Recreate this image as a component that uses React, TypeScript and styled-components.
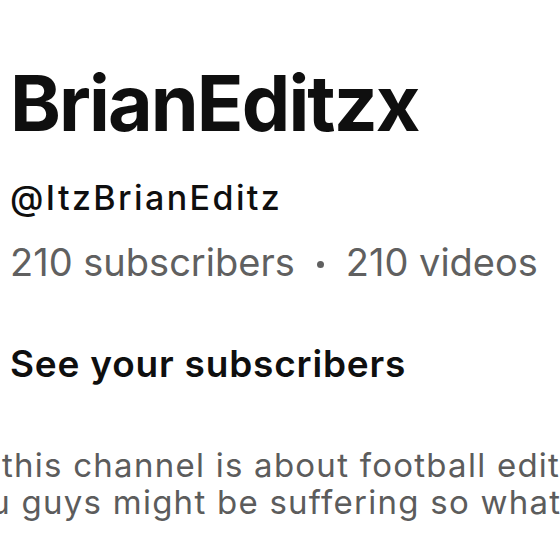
import styled, { createGlobalStyle } from 'styled-components';

const GlobalStyle = createGlobalStyle`
  html, body {
    margin: 0;
    padding: 0;
    background: #ffffff;
  }
  body {
    font-family: Inter, "Noto Sans", "Liberation Sans", sans-serif;
    -webkit-font-smoothing: antialiased;
  }
`;

const Page = styled.div`
  width: 560px;
  height: 560px;
  overflow: hidden;
  background: #fff;
  padding: 63px 0 0 10px;
  box-sizing: border-box;
`;

const ChannelName = styled.h1`
  margin: 0;
  font-size: 77px;
  font-weight: 700;
  line-height: 80px;
  letter-spacing: -1.9px;
  color: #0f0f0f;
  white-space: nowrap;
`;

const Handle = styled.div`
  margin-top: 35px;
  font-size: 34px;
  font-weight: 500;
  line-height: 40px;
  letter-spacing: 2.4px;
  color: #0f0f0f;
  white-space: nowrap;
`;

const Stats = styled.div`
  margin-top: 22px;
  display: flex;
  align-items: center;
  gap: 22px;
  font-size: 38px;
  line-height: 44px;
  color: #606060;
  white-space: nowrap;
`;

const Dot = styled.span`
  width: 7px;
  height: 7px;
  margin-top: 4px;
  border-radius: 50%;
  background: #606060;
`;

const SeeLink = styled.div`
  margin-top: 58px;
  font-size: 37px;
  font-weight: 600;
  line-height: 44px;
  letter-spacing: 0.8px;
  color: #0f0f0f;
  white-space: nowrap;
`;

const Description = styled.div`
  margin-top: 61px;
  margin-left: -10px;
  font-size: 33px;
  line-height: 37px;
  letter-spacing: 1.25px;
  color: #5c5c5c;
  white-space: nowrap;
`;

const DescLine = styled.div<{ $shift: number }>`
  margin-left: ${p => p.$shift}px;
`;

export default function App() {
  return (
    <>
      <GlobalStyle />
      <Page>
        <ChannelName>BrianEditzx</ChannelName>
        <Handle>@ItzBrianEditz</Handle>
        <Stats>
          <span>210 subscribers</span>
          <Dot />
          <span>210 videos</span>
        </Stats>
        <SeeLink>See your subscribers</SeeLink>
        <Description>
          <DescLine $shift={2}>this channel is about football edits</DescLine>
          <DescLine $shift={-50}>you guys might be suffering so what</DescLine>
        </Description>
      </Page>
    </>
  );
}
